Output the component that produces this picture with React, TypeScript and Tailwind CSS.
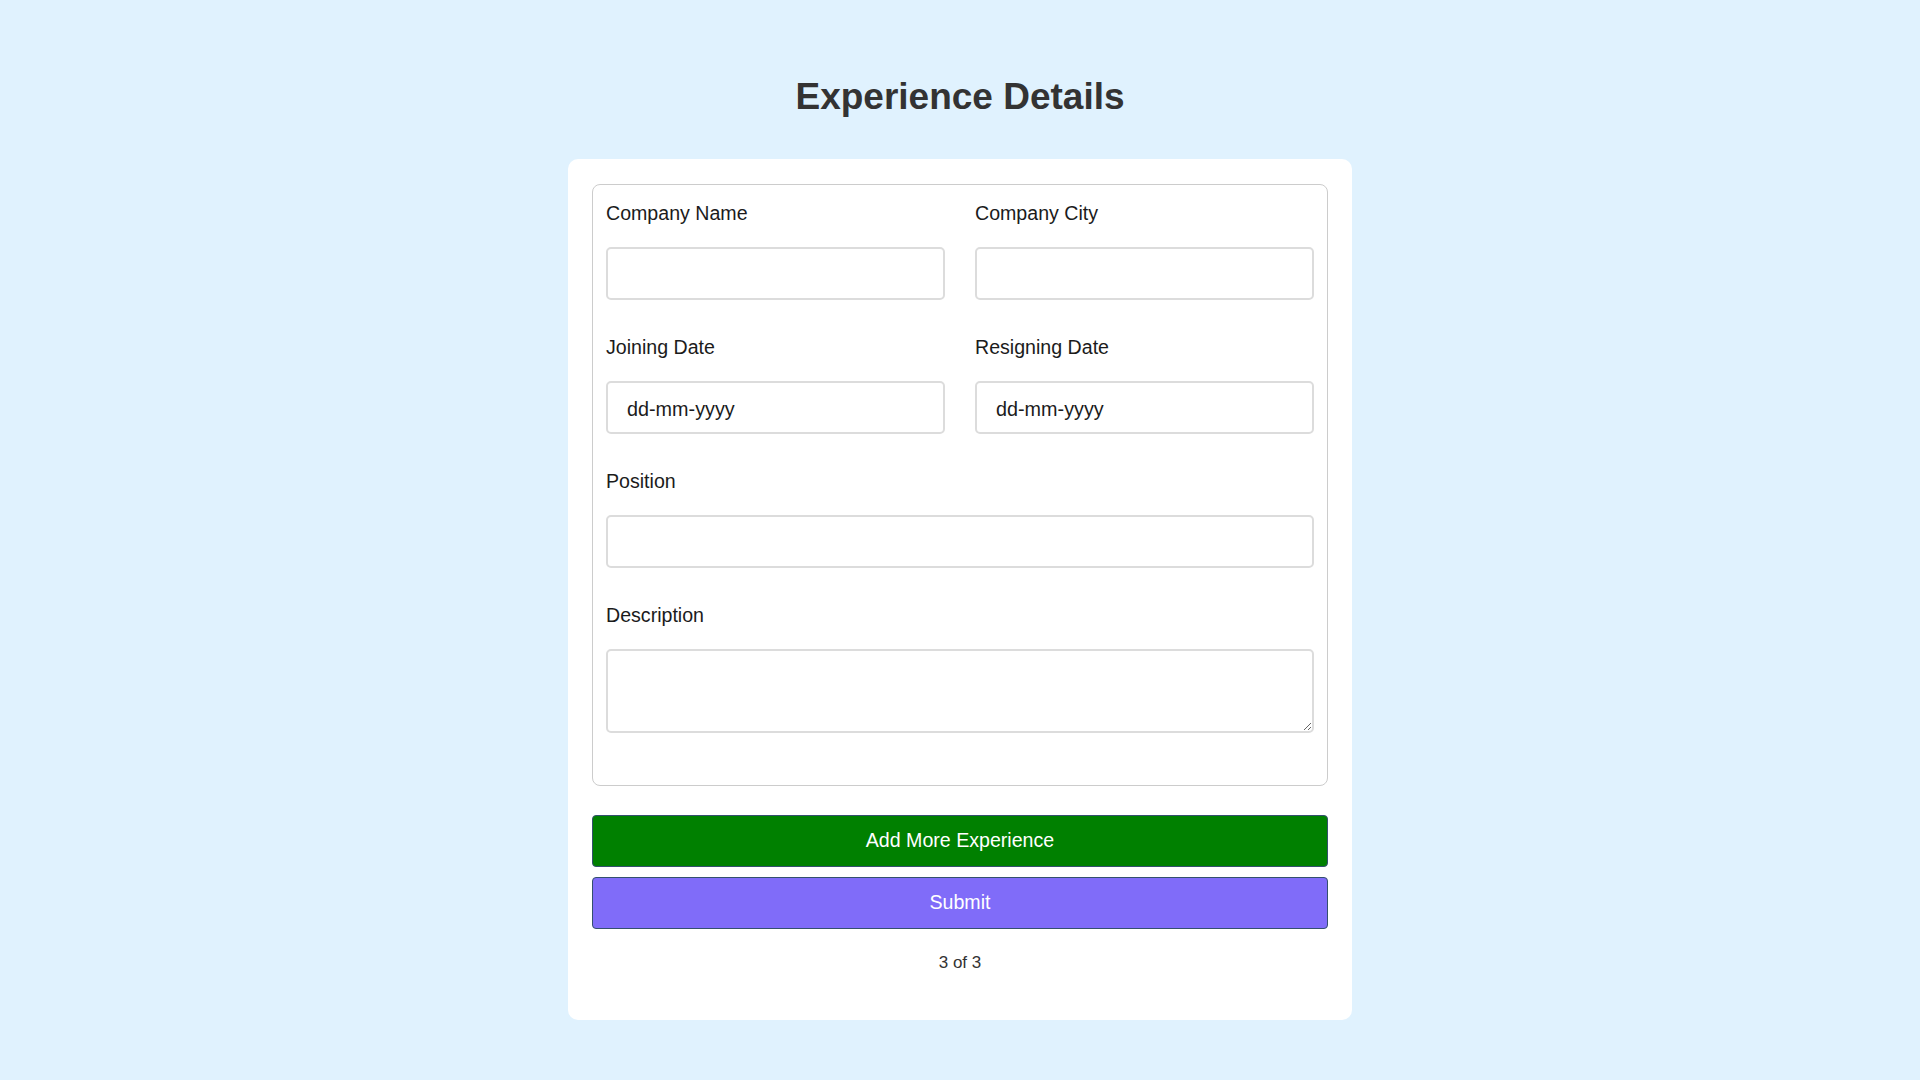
const fieldLabel = "block h-6 text-[19.6px] leading-6 text-[#1b1b1b]"
const fieldInput = "mt-[22px] block h-[53px] w-full rounded-[5px] border-2 border-[#dcdcdc] bg-white px-[19px] text-[19.8px] text-[#1b1b1b] outline-none"

const Field = ({ label, children }: { label: string; children?: React.ReactNode }) => (
  <div className="mb-[35px]">
    <label className={fieldLabel}>{label}</label>
    {children ?? <input type="text" className={fieldInput} />}
  </div>
)

const App = () => {
  return (
    <div
      className="min-h-screen bg-[#e0f2fe] pb-[61px]"
      style={{ fontFamily: '"Segoe UI", "Liberation Sans", Arial, sans-serif' }}
    >
      <h1 className="pt-[73px] text-center text-[37px] font-semibold leading-[48px] text-[#333333]">Experience Details</h1>

      <div className="mx-auto mt-[38px] w-[784px] rounded-[10px] bg-white px-6 pt-[25px] pb-[22px]">
        <div className="rounded-lg border border-[#cccccc] px-[13px] pt-4 pb-[17px]">
          <div className="grid grid-cols-2 gap-x-[30px]">
            <Field label="Company Name" />
            <Field label="Company City" />
            <Field label="Joining Date">
              <div className={fieldInput + " flex items-center pt-[4px]"}>dd-mm-yyyy</div>
            </Field>
            <Field label="Resigning Date">
              <div className={fieldInput + " flex items-center pt-[4px]"}>dd-mm-yyyy</div>
            </Field>
          </div>
          <Field label="Position" />
          <Field label="Description">
            <textarea className={fieldInput + " h-[84px] resize-y py-2"} />
          </Field>
        </div>

        <button className="mt-[29px] block h-[52px] w-full rounded-[4px] border border-[#34506e] bg-[#008000] text-[19.6px] text-white">
          Add More Experience
        </button>
        <button className="mt-[10px] block h-[52px] w-full rounded-[4px] border border-[#34506e] bg-[#806cf9] text-[19.6px] text-white">
          Submit
        </button>
        <p className="mt-[22px] mb-[23px] text-center text-[17px] leading-6 text-[#333333]">3 of 3</p>
      </div>
    </div>
  )
}

export default App
